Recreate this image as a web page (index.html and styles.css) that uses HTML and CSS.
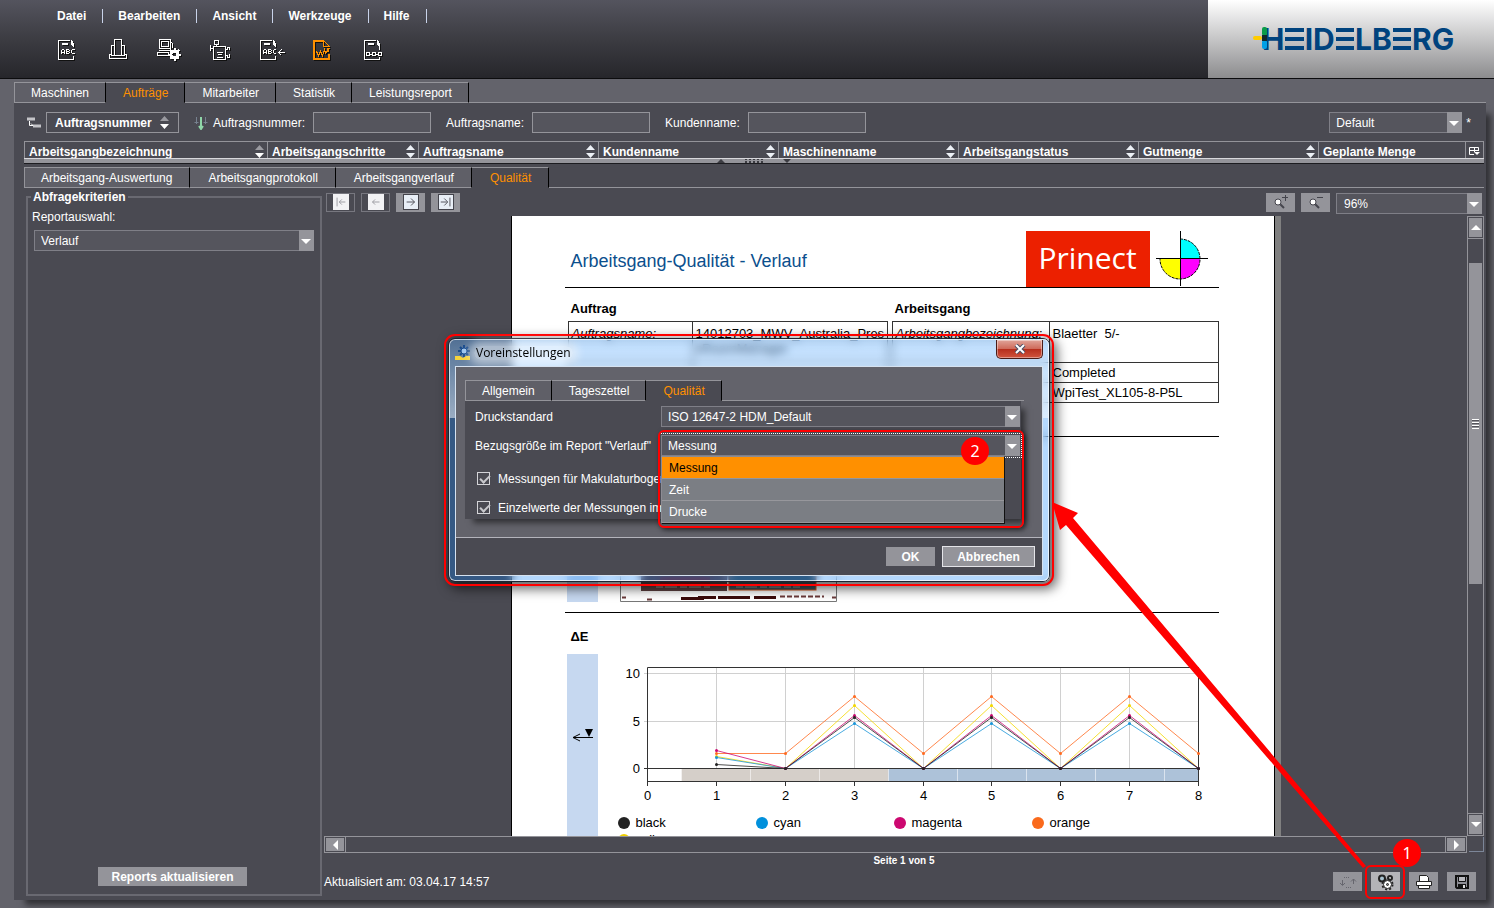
FILE: index.html
```html
<!DOCTYPE html>
<html lang="de">
  <head>
    <meta charset="UTF-8" />
    <meta name="viewport" content="width=device-width, initial-scale=1.0" />
    <title>Prinect - Aufträge</title>
    <link rel="stylesheet" href="styles.css">
  </head>
  <body>
    <header class="topbar">
      <div class="topbar-main">
        <nav class="menu">
          <a href="#">Datei</a>
          <a href="#">Bearbeiten</a>
          <a href="#">Ansicht</a>
          <a href="#">Werkzeuge</a>
          <a href="#">Hilfe</a>
        </nav>
        <div class="tools">
          <button type="button" aria-label="Aufträge">
            <svg width="26" height="24" viewBox="0 0 26 24">
              <path d="M4 2.500H16M4.500 2V21.500H19.500V18M17.500 2V7M18.500 3V8M19.500 5V9M8 5.500H14M8 6.500H14" />
              <path d="M7.500 16V12.500L9 11.500L10.500 12.500V16M7.500 14.500H10.500M12.500 11V16M12 11.500H15M12 13.500H15M12 15.500H15M15.500 12V13M15.500 14V15M21 11.500H18M17.500 12V15M18 15.500H21" />
            </svg>
          </button>
          <button type="button" aria-label="Maschinen">
            <svg width="26" height="24" viewBox="0 0 26 24">
              <path d="M9.500 1.500H16.500V17.500H9.500ZM9.500 7.500H6.500V16.500H4.500V20.500H21.500V16.500H19.500V7.500H16.500M6 17.500H20" />
            </svg>
          </button>
          <button type="button" aria-label="System">
            <svg width="26" height="24" viewBox="0 0 26 24">
              <path d="M3.500 1.500H14.500V10.500H3.500ZM5.500 3.500H12.500V8.500H5.500ZM14.500 3.500L16.500 5.500V10M3 12.500H13M1.500 14.500H12.500V17.500H1.500Z" />
              <circle cx="18.500" cy="16.500" r="3.500" stroke-width="3" />
              <path class="bold" d="M18.500 10V13M18.500 20V23M12 16.500H15M22 16.500H25M14 12L16 14M21 19L23 21M14 21L16 19M21 14L23 12" />
            </svg>
          </button>
          <button type="button" aria-label="Druckmaschine">
            <svg width="26" height="24" viewBox="0 0 26 24">
              <path d="M7.500 2.500H11.500V6.500H7.500ZM9.500 6.500V9M6.500 8.500H18.500V21.500H6.500ZM3.500 7V13M3.500 10.500H6.500M18.500 11.500H20.500V9.500H22.500V12M18.500 17.500H20.500V19.500H22.500V16M9.500 14.500H15.500M10.500 16.500H14.500M9.500 19.500H15.500" />
            </svg>
          </button>
          <button type="button" aria-label="Import">
            <svg width="30" height="24" viewBox="0 0 30 24">
              <path d="M4 2.500H16M4.500 2V21.500H19.500V18M17.500 2V7M18.500 3V8M19.500 5V9M8 5.500H14M8 6.500H14" />
              <path d="M7.500 16V12.500L9 11.500L10.500 12.500V16M7.500 14.500H10.500M12.500 11V16M12 11.500H15M12 13.500H15M12 15.500H15M15.500 12V13M15.500 14V15M20 11.500H18M17.500 12V15M18 15.500H20M22 14.500H29M25.500 11.500L22.500 14.500L25.500 17.500" />
            </svg>
          </button>
          <button type="button" class="on" aria-label="Qualität">
            <svg width="26" height="24" viewBox="0 0 26 24">
              <path class="bold" d="M5 22V3H14M4 21H20V16M19 10V14" />
              <path d="M14.500 2V8.500H20.500L14.500 2.500M7.500 13.500L9.500 17.500L11.500 13.500L13.500 17.500L15.500 11.500L16.500 15.500L20.500 10.500" />
            </svg>
          </button>
          <button type="button" aria-label="Ablauf">
            <svg width="26" height="24" viewBox="0 0 26 24">
              <path d="M4 2.500H16M4.500 2V21.500H19.500V19M17.500 2V7M18.500 3V8M19.500 5V12M8 5.500H14M8 6.500H14M6.500 14.500H9.500V17.500H6.500ZM12.500 14.500H15.500V17.500H12.500ZM18.500 14.500H21.500V17.500H18.500ZM9.500 16.500H12.500M15.500 16.500H18.500" />
            </svg>
          </button>
        </div>
      </div>
      <div class="brand">
        <svg class="brand-mark" width="14" height="22" viewBox="0 0 14 22">
          <rect x="0" y="9" width="9" height="4" rx="2" fill="#fc0" />
          <rect x="9" y="0" width="5" height="9" rx="2" fill="#0a9c49" />
          <rect x="9" y="13" width="5" height="9" rx="2" fill="#00a0e6" />
          <rect x="9" y="8" width="5" height="6" fill="#122a2c" />
        </svg>
        <span class="brand-name">H<span class="bars">E</span>ID<span class="bars">E</span>LB<span class="bars">E</span>RG</span>
      </div>
    </header>

    <main class="app">
      <div class="tabs">
        <button type="button">Maschinen</button>
        <button type="button" class="active">Aufträge</button>
        <button type="button">Mitarbeiter</button>
        <button type="button">Statistik</button>
        <button type="button">Leistungsreport</button>
      </div>

      <div class="panel">
        <form class="filters">
          <svg width="14" height="12" viewBox="0 0 14 12">
            <path d="M0 2H8M6 9H14" stroke="#c4c4c8" stroke-width="3" />
            <path d="M2.500 4V8.500H6M4 6.500L6 8.500" stroke="#fff" fill="none" />
          </svg>
          <button type="button" class="sort-btn">Auftragsnummer <span class="sorter half"></span></button>
          <svg width="14" height="14" viewBox="0 0 14 14">
            <path d="M2.500 1V8M0.500 6.500H4.500M11.500 1V8M9.500 6.500H13.500" stroke="#77818f" fill="none" />
            <path d="M7 1V13M5 10L7 13L9 10" stroke="#8fd6a8" stroke-width="2" fill="none" />
          </svg>
          <label for="f-nr">Auftragsnummer:</label><input type="text" id="f-nr">
          <label for="f-name">Auftragsname:</label><input type="text" id="f-name">
          <label for="f-kunde">Kundenname:</label><input type="text" id="f-kunde">
          <span class="combo view-combo"><select aria-label="Ansicht"><option>Default</option></select></span>
          <span class="star">*</span>
        </form>

        <div class="jobs">
          <table>
            <colgroup>
              <col class="c-first"><col class="c-second"><col class="c-std"><col class="c-std"><col class="c-std"><col class="c-std"><col class="c-std"><col><col class="c-icon">
            </colgroup>
            <thead>
              <tr>
                <th>Arbeitsgangbezeichnung<span class="sorter half"></span></th>
                <th>Arbeitsgangschritte<span class="sorter"></span></th>
                <th>Auftragsname<span class="sorter"></span></th>
                <th>Kundenname<span class="sorter"></span></th>
                <th>Maschinenname<span class="sorter"></span></th>
                <th>Arbeitsgangstatus<span class="sorter"></span></th>
                <th>Gutmenge<span class="sorter"></span></th>
                <th>Geplante Menge</th>
                <th class="col-menu">
                  <svg width="11" height="10" viewBox="0 0 11 10">
                    <path d="M5 8.500H0.500V1.500H9.500V4M0.500 4.500H10M5.500 1V6" stroke="#fff" fill="none" />
                    <path d="M5 6H11L8 9Z" fill="#fff" />
                  </svg>
                </th>
              </tr>
            </thead>
          </table>
        </div>
        <div class="splitter">
          <i class="tri-up"></i><i class="grip"></i><i class="tri-down"></i>
        </div>

        <div class="tabs sub">
          <button type="button">Arbeitsgang-Auswertung</button>
          <button type="button">Arbeitsgangprotokoll</button>
          <button type="button">Arbeitsgangverlauf</button>
          <button type="button" class="active">Qualität</button>
        </div>

        <div class="work">
          <fieldset class="criteria">
            <legend>Abfragekriterien</legend>
            <label for="report">Reportauswahl:</label>
            <span class="combo"><select id="report"><option>Verlauf</option></select></span>
            <button type="button" class="btn refresh">Reports aktualisieren</button>
          </fieldset>

          <section class="viewer">
            <div class="viewer-bar">
              <button type="button" class="nav off" aria-label="Erste Seite"><svg width="16" height="16" viewBox="0 0 16 16"><path d="M3.500 3V13M13 8H6M9 5L6 8L9 11" /></svg></button>
              <button type="button" class="nav off" aria-label="Vorherige Seite"><svg width="16" height="16" viewBox="0 0 16 16"><path d="M12 8H4M7 5L4 8L7 11" /></svg></button>
              <button type="button" class="nav" aria-label="Nächste Seite"><svg width="16" height="16" viewBox="0 0 16 16"><path d="M3 8H12M8 4L12 8L8 12" /></svg></button>
              <button type="button" class="nav" aria-label="Letzte Seite"><svg width="16" height="16" viewBox="0 0 16 16"><path d="M2 8H9M6 4L10 8L6 12M12.500 3V13" /></svg></button>
              <button type="button" class="nav zoom-in" aria-label="Vergrößern"><svg width="18" height="16" viewBox="0 0 18 16"><path stroke-width="2" d="M8 10L12 14" /><circle cx="6" cy="8" r="3" fill="#fff" /><path d="M10 3.500H16M13.500 1V7" /></svg></button>
              <button type="button" class="nav" aria-label="Verkleinern"><svg width="18" height="16" viewBox="0 0 18 16"><path stroke-width="2" d="M8 10L12 14" /><circle cx="6" cy="8" r="3" fill="#fff" /><path d="M10 3.500H16" /></svg></button>
              <span class="combo zoom-combo"><select aria-label="Zoom"><option>96%</option></select></span>
            </div>

            <div class="canvas">
              <div class="sheet-area">
                <article class="sheet">
                  <div class="sheet-head">
                    <h1>Arbeitsgang-Qualität - Verlauf</h1>
                    <span class="prinect">Prinect</span>
                    <svg width="52" height="56" viewBox="0 0 52 56">
                      <path d="M24 28V8A20 20 0 0 1 44 28Z" fill="#0ff" />
                      <path d="M24 28H44A20 20 0 0 1 24 48Z" fill="#f0f" />
                      <path d="M24 28V48A20 20 0 0 1 4 28Z" fill="#ff0" />
                      <path d="M24 8A20 20 0 1 1 4 28" fill="none" stroke="#000" stroke-dasharray="3 1" />
                      <path d="M0 27.500H52M24.500 0V55" stroke="#000" />
                    </svg>
                  </div>
                  <div class="facts">
                    <section>
                      <h2>Auftrag</h2>
                      <table>
                        <tr class="tall"><th>Auftragsname:</th><td>14012703_MWV_Australia_Pres sRoomManager</td></tr>
                        <tr><th></th><td></td></tr>
                        <tr><th></th><td></td></tr>
                      </table>
                    </section>
                    <section class="wide">
                      <h2>Arbeitsgang</h2>
                      <table>
                        <tr class="tall"><th>Arbeitsgangbezeichnung:</th><td>Blaetter&nbsp; 5/-</td></tr>
                        <tr><th></th><td>Completed</td></tr>
                        <tr><th></th><td>WpiTest_XL105-8-P5L</td></tr>
                      </table>
                    </section>
                  </div>
                  <div class="preview">
                    <div class="strip"></div>
                    <svg width="217" height="102" viewBox="0 0 217 102">
                      <path d="M0.500 0V101.500H216.500V0" fill="none" stroke="#777" />
                      <rect x="21" y="10" width="86" height="81" fill="#5c4040" />
                      <rect x="109" y="10" width="87" height="80" fill="#3f5058" stroke="#d4561a" />
                      <rect x="40" y="77" width="50" height="9" fill="#7d1e22" />
                      <path d="M36 87H90M116 87H180" stroke="#a79c96" stroke-dasharray="7 2 12 3" />
                      <path d="M61 98.500H84M78 97.500H96M98 97.500H130M134 97.500H156" stroke="#3b0b0b" stroke-width="3" />
                      <path d="M160 96.500H204M2 97.500H6M27 99.500H32M212 97.500H216" stroke="#6b3a3a" stroke-width="2" stroke-dasharray="5 2" />
                    </svg>
                  </div>
                  <h2 class="delta">ΔE</h2>
                  <div class="delta-row">
                    <div class="strip">
                      <svg width="22" height="14" viewBox="0 0 22 14">
                        <path d="M13 1H21L17 9Z" />
                        <path d="M1 9.500H21M8 6L1 9.500L8 13" fill="none" stroke="#000" />
                      </svg>
                    </div>
                    <div class="chart-box">
                      <svg id="chart" width="590" height="146" viewBox="0 0 590 146"></svg>
                      <ul class="legend">
                        <li><i class="dot black"></i>black</li>
                        <li><i class="dot cyan"></i>cyan</li>
                        <li><i class="dot magenta"></i>magenta</li>
                        <li><i class="dot orange"></i>orange</li>
                        <li><i class="dot yellow"></i>yellow</li>
                      </ul>
                    </div>
                  </div>
                </article>
              </div>
              <div class="vscroll">
                <button type="button" class="sb up" aria-label="Nach oben"></button>
                <div class="thumb"><i></i></div>
                <button type="button" class="sb down" aria-label="Nach unten"></button>
              </div>
              <div class="hscroll">
                <button type="button" class="sb left" aria-label="Nach links"></button>
                <button type="button" class="sb right" aria-label="Nach rechts"></button>
              </div>
              <div class="corner"></div>
            </div>

            <div class="page-no">Seite 1 von 5</div>
            <div class="status">
              <span>Aktualisiert am: 03.04.17 14:57</span>
              <button type="button" class="nav" aria-label="Aktualisieren">
                <svg width="18" height="14" viewBox="0 0 18 14"><path class="dim" d="M3.500 5V10M1 8L3.500 10.500L6 8M14.500 4V9M12 6.500L14.500 4L17 6.500" /><path class="dim" stroke-dasharray="1 1" d="M5 2.500H11M7 12.500H13" /></svg>
              </button>
              <button type="button" class="nav lit" aria-label="Voreinstellungen">
                <svg width="18" height="18" viewBox="0 0 18 18">
                  <circle cx="5" cy="5.500" r="3" fill="#a9c3d0" stroke="#222" stroke-width="2" />
                  <circle cx="13" cy="5" r="2" fill="#ddd" stroke="#222" stroke-width="2" />
                  <circle cx="10.500" cy="11.500" r="5" fill="none" stroke="#222" stroke-width="2" stroke-dasharray="2 2" />
                  <circle cx="10.500" cy="11.500" r="4" fill="#fff" stroke="#222" />
                  <circle cx="10.500" cy="11.500" r="1" fill="#888" stroke="#222" />
                </svg>
              </button>
              <button type="button" class="nav" aria-label="Drucken">
                <svg width="18" height="16" viewBox="0 0 18 16"><path fill="#fff" stroke="#222" d="M4.500 7.500V1.500H11.500L13.500 3.500V7.500M1.500 7.500H16.500V11.500H1.500ZM3.500 11.500H14.500V14.500H3.500Z" /></svg>
              </button>
              <button type="button" class="nav" aria-label="Speichern">
                <svg width="16" height="16" viewBox="0 0 16 16"><path fill="#8d8d94" stroke="#111" stroke-width="2" d="M2 2H14V14H3L2 13Z" /><path fill="#b9b9be" stroke="#111" d="M4.500 2.500H11.500V7.500H4.500Z" /><path fill="#111" stroke="none" d="M4 10H12V14H4Z" /><path fill="#ddd" stroke="none" d="M9 11H11V14H9Z" /></svg>
              </button>
            </div>
          </section>
        </div>
      </div>
    </main>

    <div class="dialog" role="dialog" aria-labelledby="dlg-title">
      <div class="glass"></div>
      <div class="dialog-title">
        <svg width="16" height="16" viewBox="0 0 16 16">
          <path d="M9 0V12M3 6H15M5 2L13 10M13 2L5 10" stroke="#174a8c" stroke-width="2" />
          <circle cx="9" cy="6" r="3" fill="#9cc4ee" stroke="#174a8c" />
          <path d="M0 11H5L8 13L11 11H15V15H0Z" fill="#f5d33c" />
        </svg>
        <span id="dlg-title">Voreinstellungen</span>
        <button type="button" class="close" aria-label="Schließen">
          <svg width="12" height="10" viewBox="0 0 12 10">
            <path d="M2 1L10 9M10 1L2 9" stroke="#4b4f66" stroke-width="4" />
            <path d="M2 1L10 9M10 1L2 9" stroke="#fff" stroke-width="2" />
          </svg>
        </button>
      </div>
      <div class="dialog-body">
        <div class="dialog-main">
          <div class="tabs">
            <button type="button">Allgemein</button>
            <button type="button">Tageszettel</button>
            <button type="button" class="active">Qualität</button>
          </div>
          <div class="dialog-panel">
            <div class="row">
              <label for="std">Druckstandard</label>
              <span class="combo"><select id="std"><option>ISO 12647-2 HDM_Default</option></select></span>
            </div>
            <div class="row">
              <label for="ref">Bezugsgröße im Report "Verlauf"</label>
              <span class="combo focused">
                <select id="ref"><option>Messung</option><option>Zeit</option><option>Drucke</option></select>
              </span>
              <ul class="popup" role="listbox" aria-label="Bezugsgröße">
                <li role="option" aria-selected="true">Messung</li>
                <li role="option">Zeit</li>
                <li role="option">Drucke</li>
              </ul>
              <div class="mark-box"></div>
              <span class="badge two">2</span>
            </div>
            <label class="check"><input type="checkbox" checked>Messungen für Makulaturbogen</label>
            <label class="check"><input type="checkbox" checked>Einzelwerte der Messungen im</label>
          </div>
        </div>
        <div class="dialog-foot">
          <button type="button" class="btn ok">OK</button>
          <button type="button" class="btn cancel">Abbrechen</button>
        </div>
      </div>
    </div>

    <!-- callouts: arrow from the settings button to the dialog -->
    <svg class="arrow" width="330" height="376" viewBox="0 0 330 376">
      <path d="M1 2L27 13L22 18L315 366L312 368L15 25L9 30Z" fill="#f00" />
    </svg>
    <div class="mark-button"></div>
    <span class="badge one">1</span>

    <script src="chart.js"></script>
  </body>
</html>
```
FILE: chart.js
```js
// Delta E per sheet, x axis 0..8, y axis 0..10
const series = [
  { color: '#f4d800', values: [1.3, 0, 6.6, 0, 6.6, 0, 6.6, 0] },
  { color: '#ff6a20', values: [1.6, 1.6, 7.6, 1.6, 7.6, 1.6, 7.6, 1.6] },
  { color: '#1a96d8', values: [1.2, 0, 4.7, 0, 4.7, 0, 4.7, 0] },
  { color: '#cc0870', values: [1.9, 0, 5.6, 0, 5.6, 0, 5.6, 0] },
  { color: '#222222', values: [0.4, 0, 5.4, 0, 5.4, 0, 5.4, 0] },
];

const left = 27;
const zero = 108;
const stepX = 551 / 8;
const stepY = 9.5;
const px = (v) => Math.round(left + v * stepX) + 0.5;
const py = (v) => Math.round(zero - v * stepY) + 0.5;

let out = '';

// sheet ranges below the zero line
for (let i = 0; i < 8; i++) {
  const from = px(i + 0.5);
  const to = i < 7 ? px(i + 1.5) : px(8);
  out += `<rect x="${from}" y="${zero}" width="${to - from}" height="14" fill="${i < 3 ? '#d5cfc9' : '#adc2d9'}"/>`;
  out += `<path d="M${from} ${zero}v14" stroke="#fff" stroke-opacity="0.4"/>`;
}

for (let i = 0; i <= 8; i++) {
  if (i > 0 && i < 8) {
    out += `<path class="grid" d="M${px(i)} 7V${zero}"/>`;
  }
  out += `<path class="axis" d="M${px(i)} 121V126"/>`;
  out += `<text x="${px(i)}" y="140" text-anchor="middle">${i}</text>`;
}

[0, 5, 10].forEach((v) => {
  out += `<path class="${v ? 'grid' : 'axis'}" d="M${left - 3} ${py(v)}H${left + 551}"/>`;
  out += `<text x="20" y="${py(v) + 4}" text-anchor="end">${v}</text>`;
});

out += `<path class="axis" d="M${px(0)} 7.5H${px(8)}V121.5H${px(0)}Z"/>`;

series.forEach((s) => {
  const pts = s.values.map((v, i) => [px(i + 1), py(v)]);
  out += `<polyline points="${pts.join(' ')}" fill="none" stroke="${s.color}" stroke-width="0.8"/>`;
  pts.forEach(([x, y]) => {
    out += `<circle cx="${x}" cy="${y}" r="1.5" fill="${s.color}"/>`;
  });
});

document.getElementById('chart').innerHTML = out;
```
FILE: styles.css
```css
* {
  box-sizing: border-box;
}

body {
  margin: 0;
  height: 100vh;
  display: flex;
  flex-direction: column;
  position: relative;
  overflow: hidden;
  background: #63636b;
  color: #fff;
  font: 12px/14px "Liberation Sans", Arial, sans-serif;
}

button,
input,
select {
  font: inherit;
  color: inherit;
  border-radius: 0;
  margin: 0;
}

button {
  border: 0;
  padding: 0;
  background: none;
  white-space: nowrap;
}

ul {
  list-style: none;
  margin: 0;
  padding: 0;
}

svg {
  display: block;
  flex: none;
}

/* Top bar */
.topbar {
  display: flex;
  height: 79px;
  flex: none;
  border-bottom: 1px solid #0c0c0e;
  background: linear-gradient(#54545e, #3c3c42 50%, #26262b);
}

.topbar-main {
  flex: 1;
  padding: 9px 0 0 42px;
}

.menu {
  display: flex;
}

.menu a {
  padding: 0 16px 0 15px;
  border-right: 1px solid #c9d3ea;
  color: #fff;
  font-weight: bold;
  text-decoration: none;
}

.tools {
  display: flex;
  margin: 15px 0 0 -1px;
}

.tools button {
  width: 51px;
  display: flex;
  justify-content: center;
}

.tools svg {
  fill: none;
  stroke: #fff;
  stroke-width: 2;
  shape-rendering: crispEdges;
  filter: drop-shadow(1px 1px 0 #111);
}

.tools path {
  stroke-width: 1;
}

.tools .bold {
  stroke-width: 2;
}

.tools .on svg {
  stroke: #ff9000;
}

.brand {
  width: 286px;
  display: flex;
  align-items: center;
  padding-left: 45px;
  background: linear-gradient(#fff, #8c8c8e);
}

.brand-mark {
  margin-right: -5px;
  margin-bottom: 2px;
  z-index: 1;
}

.brand-name {
  color: #00437e;
  font: bold 30px/30px Inter, sans-serif;
}

.bars {
  margin: 0 1px;
  color: transparent;
  background:
    linear-gradient(#00437e, #00437e) 0 7px / 100% 4px no-repeat,
    linear-gradient(#00437e, #00437e) 0 16px / 100% 4px no-repeat,
    linear-gradient(#00437e, #00437e) 0 25px / 100% 4px no-repeat;
}

/* Main area */
.app {
  flex: 1;
  min-height: 0;
  display: flex;
  flex-direction: column;
  padding: 3px 8px 8px 14px;
}

.tabs {
  display: flex;
  flex: none;
  height: 21px;
}

.tabs::after {
  content: "";
  flex: 1;
  border-bottom: 1px solid #94949a;
}

.tabs button {
  padding: 0 16px;
  border: 1px solid #94949a;
  border-right-color: #000;
  background: #5f5f67;
}

.tabs button + button {
  border-left: 0;
  padding-left: 17px;
}

.tabs .active {
  background: #4a4a52;
  border-bottom-color: #4a4a52;
  color: #ff9000;
}

.panel {
  flex: 1;
  min-height: 0;
  display: flex;
  flex-direction: column;
  padding: 0 2px 4px 10px;
  background: #4a4a52;
  box-shadow: 8px 8px 6px -3px rgba(0, 0, 0, 0.5);
}

.filters {
  display: flex;
  align-items: center;
  flex: none;
  height: 39px;
  padding: 0 13px 0 3px;
  margin-bottom: -1px;
}

.filters label {
  margin: 0 8px 0 5px;
}

.filters input + label {
  margin-left: 15px;
}

.filters input {
  width: 118px;
  height: 21px;
  background: #55555d;
  border: 1px solid #94949a;
}

.sort-btn {
  display: flex;
  align-items: center;
  justify-content: space-between;
  width: 133px;
  height: 21px;
  margin: 0 15px 0 5px;
  padding: 0 9px 0 8px;
  border: 1px solid #94949a;
  font-weight: bold;
}

.sorter {
  width: 9px;
  height: 13px;
  background: #edf1f6;
  clip-path: polygon(50% 0, 100% 38%, 0 38%, 0 62%, 100% 62%, 50% 100%, 0 62%, 0 38%);
}

.sorter.half {
  background: linear-gradient(#9a9aa0 50%, #fff 50%);
}

.combo {
  display: block;
  position: relative;
  height: 21px;
}

.combo select {
  width: 100%;
  height: 100%;
  padding: 0 20px 0 6px;
  appearance: none;
  background: #55555d;
  border: 1px solid #7f7f87;
  outline: 0;
}

.combo::after {
  content: "";
  position: absolute;
  top: 0;
  right: 0;
  bottom: 0;
  width: 15px;
  background: #94949a;
}

.combo::before {
  content: "";
  position: absolute;
  z-index: 1;
  top: 9px;
  right: 3px;
  border: 5px solid transparent;
  border-top-color: #fff;
  border-bottom: 0;
}

.view-combo {
  width: 133px;
  margin-left: auto;
}

.star {
  margin-left: 4px;
}

/* Job list header */
.jobs {
  flex: none;
  height: 17px;
  overflow: hidden;
}

.jobs table {
  width: 100%;
  table-layout: fixed;
  border-collapse: collapse;
}

.c-first {
  width: 243px;
}

.c-second {
  width: 151px;
}

.c-std {
  width: 180px;
}

.c-icon {
  width: 18px;
}

.jobs th {
  position: relative;
  height: 20px;
  padding: 0 4px;
  border: 1px solid #94949a;
  text-align: left;
}

.jobs .sorter {
  position: absolute;
  right: 3px;
  top: 3px;
}

.jobs .col-menu {
  padding: 0 3px 2px;
}

.splitter {
  flex: none;
  display: flex;
  justify-content: center;
  gap: 20px;
  height: 6px;
  border-top: 1px solid #d8d8dc;
  border-bottom: 1px solid #1c1c20;
  background: #94949a;
}

.splitter i {
  width: 8px;
  height: 4px;
  background: #3c3c42;
}

.splitter .tri-up {
  clip-path: polygon(50% 0, 100% 100%, 0 100%);
}

.splitter .tri-down {
  clip-path: polygon(0 0, 100% 0, 50% 100%);
}

.splitter .grip {
  width: 18px;
  background:
    linear-gradient(transparent 1px, #94949a 1px 2px, transparent 2px),
    repeating-linear-gradient(90deg, #3c3c42 0 2px, #94949a 2px 4px);
}

.tabs.sub {
  margin-top: 3px;
}

.sub button {
  padding-right: 17px;
}

.tabs.sub button + button {
  padding-left: 18px;
}

/* Criteria and viewer */
.work {
  flex: 1;
  min-height: 0;
  display: flex;
}

.criteria {
  display: flex;
  flex-direction: column;
  width: 296px;
  min-width: 0;
  margin: 2px 2px 0 2px;
  padding: 6px 6px 8px;
  border: 2px solid #696971;
}

.criteria legend {
  padding: 0 2px;
  margin-left: -3px;
  font-weight: bold;
}

.criteria label {
  margin: 0 0 6px -2px;
}

.refresh {
  width: 149px;
  margin: auto 0 0 64px;
}

.btn {
  height: 19px;
  background: #94949a;
  font-weight: bold;
}

.viewer {
  flex: 1;
  min-width: 0;
  display: flex;
  flex-direction: column;
}

.viewer-bar {
  display: flex;
  align-items: center;
  gap: 6px;
  height: 28px;
  padding: 0 2px;
}

.nav {
  display: flex;
  align-items: center;
  justify-content: center;
  width: 29px;
  height: 19px;
  background: #94949a;
}

.nav svg {
  fill: none;
  stroke: #44444c;
}

.nav .dim {
  stroke: #66666e;
}

.nav[aria-label$="Seite"] svg {
  background: #e8eef6;
  border: 1px solid #44444c;
}

.nav.off {
  background: none;
  border: 1px solid #77777f;
}

.nav.off[aria-label$="Seite"] svg {
  background: #f2f2f4;
  border-color: #f2f2f4;
  stroke: #94949a;
}

.nav.lit {
  background: #b4b4b8;
}

.zoom-in {
  margin-left: auto;
}

.zoom-combo {
  width: 146px;
  margin-top: 3px;
}

.zoom-combo select {
  padding-left: 7px;
}

.canvas {
  flex: 1;
  min-height: 0;
  display: grid;
  grid-template: minmax(0, 1fr) 17px / minmax(0, 1fr) 17px;
}

.sheet-area {
  overflow: hidden;
}

.vscroll,
.hscroll {
  display: flex;
  border: 1px solid #94949a;
}

.vscroll {
  flex-direction: column;
}

.hscroll {
  justify-content: space-between;
}

.sb {
  display: flex;
  align-items: center;
  justify-content: center;
  flex: none;
  height: 21px;
  background: #94949a;
  border: 1px solid #4a4a52;
  outline: 1px solid #94949a;
}

.hscroll .sb {
  width: 20px;
  height: 15px;
}

.sb::before {
  content: "";
  border: 5px solid transparent;
}

.sb.up::before {
  border-bottom-color: #fff;
  border-top: 0;
}

.sb.down::before {
  border-top-color: #fff;
  border-bottom: 0;
}

.sb.left::before {
  border-right-color: #fff;
  border-left: 0;
}

.sb.right::before {
  border-left-color: #fff;
  border-right: 0;
}

.thumb {
  display: flex;
  align-items: center;
  justify-content: center;
  height: 52%;
  margin: 25px 1px auto;
  background: #94949a;
}

.thumb i {
  width: 7px;
  height: 10px;
  background: repeating-linear-gradient(#fff 0 1px, #55555c 1px 2px, #94949a 2px 3px);
}

.corner {
  margin: 1px 0 1px 2px;
  border: solid #7c8698;
  border-width: 0 1px 1px 0;
}

.page-no {
  padding-top: 1px;
  font-size: 10px;
  font-weight: bold;
  text-align: center;
}

.status {
  display: flex;
  align-items: center;
  gap: 9px;
  height: 29px;
  padding: 0 8px 2px 0;
  margin-bottom: -1px;
}

.status span {
  margin-right: auto;
}

/* Report sheet */
.sheet {
  width: 770px;
  height: 1080px;
  margin: 0 auto;
  padding: 15px 56px 0 53px;
  background: #fff;
  border: solid #000;
  border-width: 0 0 0 1px;
  border-right: 6px solid #808080;
  box-shadow: inset -1px 0 #000;
  color: #000;
  font-size: 13px;
  line-height: 15px;
}

.sheet-head {
  display: flex;
  height: 57px;
  border-bottom: 1px solid #000;
}

.sheet-head h1 {
  flex: 1;
  margin: 0;
  padding-left: 6px;
  color: #0b4f8d;
  font-size: 18px;
  font-weight: normal;
  line-height: 60px;
}

.prinect {
  width: 124px;
  margin-right: 6px;
  background: #ec2000;
  color: #fff;
  font: 30px/54px "Open Sans", sans-serif;
  text-align: center;
}

.sheet-head svg {
  margin-right: 11px;
}

.facts {
  display: flex;
  gap: 4px;
  height: 149px;
  padding: 13px 0 0 3px;
  border-bottom: 1px solid #000;
}

.sheet h2 {
  margin: 0 0 5px 3px;
  font-size: 13px;
  line-height: 15px;
}

.facts table {
  width: 320px;
  table-layout: fixed;
  border-collapse: collapse;
}

.facts .wide table {
  width: 327px;
}

.facts th,
.facts td {
  height: 20px;
  padding: 2px 3px;
  border: 1px solid #333;
  text-align: left;
  vertical-align: top;
}

.facts th {
  width: 124px;
  font-weight: normal;
  font-style: italic;
}

.facts .wide th {
  width: 157px;
  white-space: nowrap;
}

.facts .tall th,
.facts .tall td {
  height: 41px;
  padding-top: 4px;
}

.preview {
  display: flex;
  align-items: flex-end;
  gap: 22px;
  height: 176px;
  padding: 0 0 10px 2px;
  border-bottom: 1px solid #000;
}

.strip {
  flex: none;
  width: 31px;
  background: #c6d8f0;
}

.preview .strip {
  height: 140px;
}

.sheet .delta {
  margin: 16px 0 0 6px;
}

.delta-row {
  display: flex;
  padding: 10px 0 0 2px;
}

.delta-row .strip {
  height: 280px;
  padding: 74px 0 0 5px;
}

.chart-box {
  padding-top: 6px;
  margin-left: 22px;
}

#chart text {
  font-size: 13px;
}

#chart .grid {
  stroke: #d0d0d0;
}

#chart .axis {
  fill: none;
  stroke: #333;
}

.legend {
  display: grid;
  grid-template-columns: repeat(4, 138px);
  margin-top: 8px;
  line-height: 17px;
}

.legend li {
  display: flex;
  align-items: center;
  gap: 6px;
}

.dot {
  width: 12px;
  height: 12px;
  border-radius: 50%;
  margin-left: -2px;
}

.black {
  background: #222;
}

.cyan {
  background: #0090dc;
}

.magenta {
  background: #cc0870;
}

.orange {
  background: #fa6a1c;
}

.yellow {
  background: #f0d000;
}

/* Settings dialog */
.dialog {
  position: absolute;
  left: 448px;
  top: 338px;
  width: 602px;
  height: 244px;
  z-index: 1;
  padding: 1px 6px 6px;
  border: 1px solid #1c2430;
  border-radius: 7px;
  outline: 2px solid #f00;
  outline-offset: 2px;
  box-shadow: 4px 4px 12px 3px rgba(0, 0, 0, 0.6);
}

.glass {
  position: absolute;
  inset: 0;
  border-radius: 6px;
  backdrop-filter: blur(4px);
  background:
    linear-gradient(rgba(255, 255, 255, 0.15), rgba(255, 255, 255, 0.5) 79px, transparent 79px),
    rgba(5, 125, 248, 0.3);
  box-shadow: inset 0 0 0 1px rgba(255, 255, 255, 0.7);
}

.dialog-title {
  position: relative;
  display: flex;
  align-items: center;
  height: 26px;
  color: #000;
}

.dialog-title span {
  margin-left: 3px;
  padding: 0 2px;
  border-radius: 8px;
  background: rgba(255, 255, 255, 0.5);
  box-shadow: 0 0 8px 5px rgba(255, 255, 255, 0.5);
  font-family: "Open Sans", sans-serif;
}

.close {
  display: flex;
  align-items: center;
  justify-content: center;
  align-self: flex-start;
  width: 47px;
  height: 19px;
  margin-left: auto;
  border: 1px solid #4a1c18;
  border-top: 0;
  border-radius: 0 0 5px 5px;
  background: linear-gradient(#e0a59a, #cf6b5b 48%, #b52d1c 50%, #d0553e);
  box-shadow: inset 0 0 0 1px rgba(255, 255, 255, 0.4);
}

.dialog-body {
  position: relative;
  display: flex;
  flex-direction: column;
  height: 210px;
  border: 1px solid #d6e2f0;
  background: #63636b;
}

.dialog-main {
  flex: 1;
  padding: 13px 18px 0 9px;
  border-bottom: 1px solid #b4b4bc;
}

.dialog-panel {
  height: 118px;
  margin-right: 3px;
  padding: 5px 0 0 10px;
  background: #4a4a52;
  box-shadow: 6px 6px 6px -2px rgba(0, 0, 0, 0.5);
}

.row {
  display: flex;
  align-items: center;
  position: relative;
  height: 21px;
  margin-bottom: 8px;
}

.row label {
  width: 186px;
  white-space: nowrap;
}

.row .combo {
  width: 359px;
}

.focused {
  outline: 1px dotted #fff;
  outline-offset: 1px;
}

.popup {
  position: absolute;
  z-index: 1;
  left: 186px;
  top: 21px;
  width: 344px;
  border: 1px solid #8c8c94;
  border-right-color: #111;
  border-bottom-color: #111;
  background: #7b7e84;
}

.popup li {
  height: 22px;
  padding-left: 7px;
  border-bottom: 1px solid #97979c;
  line-height: 22px;
}

.popup [aria-selected] {
  background: #ff9000;
  color: #000;
}

.mark-box {
  position: absolute;
  z-index: 2;
  left: 183px;
  top: -5px;
  width: 366px;
  height: 98px;
  border: 2px solid #f00;
  border-radius: 6px;
  box-shadow: 2px 2px 5px rgba(0, 0, 0, 0.6);
}

.badge {
  position: absolute;
  z-index: 3;
  width: 28px;
  height: 28px;
  border-radius: 50%;
  background: #f00;
  color: #fff;
  font: 16px/28px "Noto Sans", sans-serif;
  text-align: center;
}

.badge.two {
  left: 486px;
  top: 2px;
}

.check {
  display: flex;
  align-items: center;
  height: 13px;
  margin: 16px 0 16px 2px;
  white-space: nowrap;
}

.check input {
  appearance: none;
  width: 13px;
  height: 13px;
  margin-right: 8px;
  border: 1px solid #d4d4d8;
}

.check input::before {
  content: "";
  display: block;
  width: 8px;
  height: 4px;
  margin: 2px 0 0 2px;
  border: solid #c8c8cc;
  border-width: 0 0 2px 2px;
  transform: rotate(-45deg);
}

.dialog-foot {
  display: flex;
  align-items: center;
  justify-content: flex-end;
  gap: 7px;
  height: 37px;
  padding-right: 7px;
  background: #4a4a52;
}

.ok {
  width: 49px;
}

.cancel {
  width: 93px;
  height: 21px;
  border: 1px solid #e4e4e8;
}

/* Callouts */
.arrow {
  position: absolute;
  z-index: 2;
  left: 1051px;
  top: 500px;
}

.mark-button {
  position: absolute;
  z-index: 2;
  right: 89px;
  bottom: 9px;
  width: 40px;
  height: 34px;
  border: 2px solid #f00;
  border-radius: 6px;
}

.badge.one {
  right: 73px;
  bottom: 41px;
}
```
